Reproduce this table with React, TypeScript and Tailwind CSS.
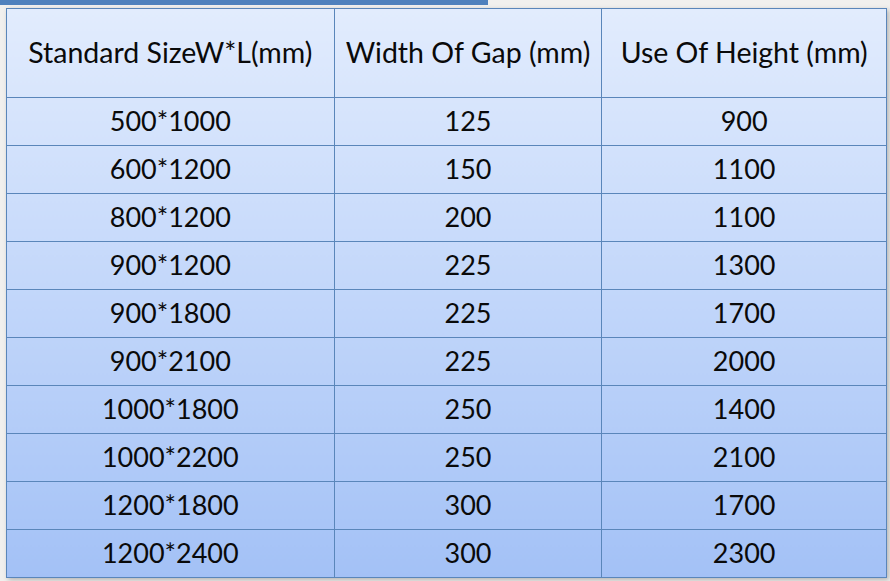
const HEAD = ['Standard SizeW*L(mm)', 'Width Of Gap (mm)', 'Use Of Height (mm)']

const ROWS = [
  ['500*1000', '125', '900'],
  ['600*1200', '150', '1100'],
  ['800*1200', '200', '1100'],
  ['900*1200', '225', '1300'],
  ['900*1800', '225', '1700'],
  ['900*2100', '225', '2000'],
  ['1000*1800', '250', '1400'],
  ['1000*2200', '250', '2100'],
  ['1200*1800', '300', '1700'],
  ['1200*2400', '300', '2300'],
]

export default function App() {
  return (
    <div className="relative w-[890px] h-[581px] overflow-hidden bg-[#f1f0ee] font-['Lato','Open_Sans',sans-serif] text-[#0a0a0a]">
      <div className="absolute left-0 top-0 w-[488px] h-[5px] bg-[#4f81bd]" />
      <div className="pl-[6px] pt-[8px]">
        <table
          className="w-[881px] border-collapse border border-[#5a86ba] shadow-[2px_2px_5px_rgba(0,0,0,0.25)] bg-gradient-to-b from-[#e2ecfd] to-[#a3c1f6]"
        >
          <colgroup>
            <col className="w-[328px]" />
            <col className="w-[268px]" />
            <col className="w-[285px]" />
          </colgroup>
          <thead>
            <tr className="h-[89px]">
              {HEAD.map((h) => (
                <th key={h} className="border border-[#5a86ba] font-normal text-[28.5px] text-center align-middle leading-none whitespace-nowrap pb-[1px]">
                  {h}
                </th>
              ))}
            </tr>
          </thead>
          <tbody>
            {ROWS.map((r, i) => (
              <tr key={i} className="h-[48px]">
                {r.map((c, j) => (
                  <td key={j} className="border border-[#5a86ba] text-[27px] text-center align-middle leading-none pb-[2px]">
                    {c}
                  </td>
                ))}
              </tr>
            ))}
          </tbody>
        </table>
      </div>
    </div>
  )
}
